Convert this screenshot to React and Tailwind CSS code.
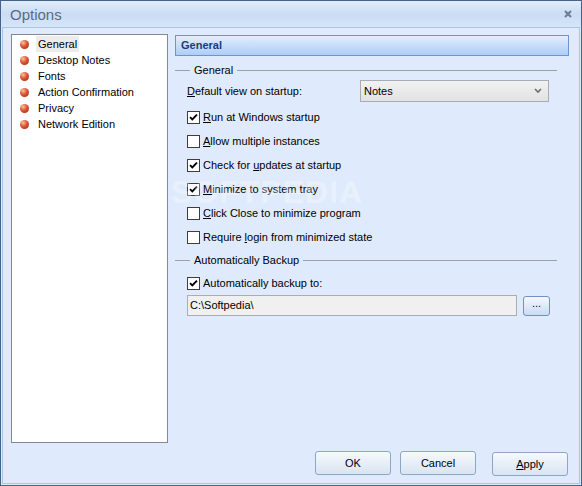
import React from "react";

const font = { fontFamily: '"Liberation Sans", Arial, sans-serif' };

const Bullet = () => (
    <span className="w-[9px] h-[9px] rounded-full shrink-0 bg-[radial-gradient(circle_at_35%_30%,#fbc3a8_0%,#e0603a_40%,#b5361a_75%,#86250f_100%)]" />
);

const Check = ({ checked }) => (
    <span className="w-[13px] h-[13px] border border-[#3d3d3d] bg-white shrink-0 flex items-center justify-center">
        {checked && (
            <svg width="9" height="9" viewBox="0 0 9 9">
                <path d="M1 4.2 L3.3 6.5 L8 1.6" stroke="#000" strokeWidth="1.9" fill="none" />
            </svg>
        )}
    </span>
);

const U = ({ children }) => <span className="underline underline-offset-[1px]">{children}</span>;

const GroupLine = ({ label }) => (
    <div className="flex items-center h-[13px]">
        <div className="w-[15px] h-px bg-[#a0a0a0]" />
        <span className="px-[4px] text-[11px] text-black leading-none">{label}</span>
        <div className="flex-1 h-px bg-[#a0a0a0] mr-[12px]" />
    </div>
);

const CheckRow = ({ checked, children }) => (
    <div className="flex items-center h-[24px] pl-[12px] gap-[3px] text-[11px] text-black">
        <Check checked={checked} />
        <span>{children}</span>
    </div>
);

const Button = ({ children }) => (
    <button className="w-[76px] h-[24px] rounded-[3px] border border-[#8ca6c8] bg-gradient-to-b from-[#f6f9fd] to-[#d9e4f2] text-[11px] text-black">
        {children}
    </button>
);

const menuItems = ["General", "Desktop Notes", "Fonts", "Action Confirmation", "Privacy", "Network Edition"];

export default function App() {
    return (
        <div className="w-[582px] h-[486px] border border-[#43628c] bg-[#dfebfc] flex flex-col overflow-hidden" style={font}>

            {/* Title bar */}
            <div className="h-[26px] shrink-0 flex items-center justify-between pl-[9px] pr-[9px] bg-gradient-to-b from-[#e2ecfa] via-[#cbdcf3] to-[#d6e5f8]">
                <span className="text-[15px] text-[#5a6b85] leading-none">Options</span>
                <svg width="8" height="8" viewBox="0 0 8 8">
                    <path d="M1 1 L7 7 M7 1 L1 7" stroke="#6d7b90" strokeWidth="2" />
                </svg>
            </div>

            {/* Body */}
            <div className="flex-1 mx-px mb-px border border-[#a8c5ea] flex flex-col pl-[8px] pt-[6px] relative">

                <div className="flex h-[409px]">

                    {/* Left list */}
                    <div className="w-[157px] h-full bg-white border border-[#848890] pt-[1px] pl-[8px]">
                        {menuItems.map((item, i) => (
                            <div key={item} className="flex items-center h-[16px] gap-[7px]">
                                <Bullet />
                                <span className={`text-[11px] text-black px-[2px] h-[16px] leading-[16px] ${i === 0 ? 'bg-[#ececec]' : ''}`}>
                                    {item}
                                </span>
                            </div>
                        ))}
                    </div>

                    {/* Right panel */}
                    <div className="w-[394px] ml-[7px] pt-px flex flex-col">

                        <div className="h-[21px] border border-[#6a95cf] bg-gradient-to-b from-[#e3eefc] to-[#aecdf6] flex items-center pl-[5px]">
                            <span className="text-[11px] font-bold text-[#173c7c]">General</span>
                        </div>

                        <div className="mt-[8px]">
                            <GroupLine label="General" />
                        </div>

                        <div className="flex items-center justify-between h-[22px] mt-[3px] pl-[12px] pr-[20px] text-[11px]">
                            <span><U>D</U>efault view on startup:</span>
                            <div className="w-[189px] h-[22px] border border-[#a8adb4] bg-gradient-to-b from-[#f2f2f2] to-[#e2e2e2] flex items-center justify-between pl-[3px] pr-[6px]">
                                <span>Notes</span>
                                <svg width="8" height="6" viewBox="0 0 8 6">
                                    <path d="M1 1 L4 4 L7 1" stroke="#6f6f6f" strokeWidth="1.6" fill="none" />
                                </svg>
                            </div>
                        </div>

                        <div className="mt-[3px]">
                            <CheckRow checked><U>R</U>un at Windows startup</CheckRow>
                            <CheckRow><U>A</U>llow multiple instances</CheckRow>
                            <CheckRow checked>Check for <U>u</U>pdates at startup</CheckRow>
                            <CheckRow checked><U>M</U>inimize to system tray</CheckRow>
                            <CheckRow><U>C</U>lick Close to minimize program</CheckRow>
                            <CheckRow>Require <U>l</U>ogin from minimized state</CheckRow>
                        </div>

                        <div className="mt-[5px]">
                            <GroupLine label="Automatically Backup" />
                        </div>

                        <div className="mt-[4px]">
                            <CheckRow checked>Automatically backup to:</CheckRow>
                        </div>

                        <div className="flex items-center pl-[12px]">
                            <div className="w-[330px] h-[21px] border border-[#abadb3] bg-[#f0f0f0] flex items-center pl-[2px] text-[11px]">
                                C:\Softpedia\
                            </div>
                            <button className="ml-[6px] w-[27px] h-[20px] rounded-[3px] border border-[#6e92c6] bg-gradient-to-b from-[#f4f8fd] to-[#c9dbf3] text-[11px] leading-none pb-[4px]">
                                ...
                            </button>
                        </div>
                    </div>
                </div>

                {/* Buttons */}
                <div className="flex justify-end gap-[9px] mt-[8px] pr-[11px]">
                    <Button>OK</Button>
                    <Button>Cancel</Button>
                    <div className="ml-[7px]">
                        <Button><U>A</U>pply</Button>
                    </div>
                </div>

                {/* Watermark */}
                <div className="absolute left-[168px] top-[140px] text-[32px] font-bold tracking-[1px] text-white/30 pointer-events-none select-none">
                    SOFTPEDIA
                </div>
            </div>
        </div>
    );
}
